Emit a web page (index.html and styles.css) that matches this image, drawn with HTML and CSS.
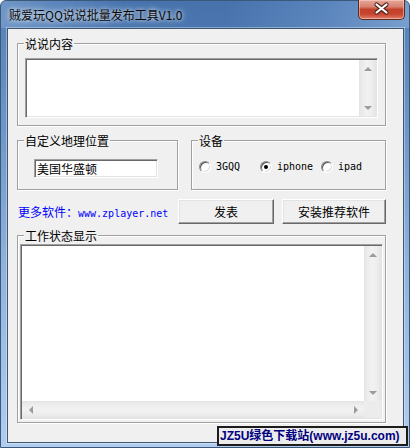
FILE: index.html
```html
<!DOCTYPE html>
<html lang="zh-CN">
<head>
    <meta charset="UTF-8">
    <title>贼爱玩QQ说说批量发布工具V1.0</title>
    <link rel="stylesheet" href="styles.css">
</head>
<body>
    <div class="window">
        <!-- 标题栏 -->
        <div class="title-bar">
            <div class="title">贼爱玩QQ说说批量发布工具V1.0</div>
            <div class="close-btn">
                <svg width="47" height="19" viewBox="0 0 47 19">
                    <path d="M18.5 5.5 L28.5 13.5 M28.5 5.5 L18.5 13.5" stroke="#4a2118" stroke-width="4.2" stroke-linecap="round"/>
                    <path d="M18.5 5.5 L28.5 13.5 M28.5 5.5 L18.5 13.5" stroke="#fff" stroke-width="2.2" stroke-linecap="round"/>
                </svg>
            </div>
        </div>

        <!-- 客户区 -->
        <div class="client">
            <div class="group group-content">
                <div class="group-title">说说内容</div>
                <div class="edit edit-content">
                    <div class="edit-body"></div>
                    <div class="vscroll">
                        <div class="arrow arrow-up"></div>
                        <div class="arrow arrow-down"></div>
                    </div>
                </div>
            </div>

            <div class="row">
                <div class="group group-location">
                    <div class="group-title">自定义地理位置</div>
                    <div class="input">美国华盛顿</div>
                </div>
                <div class="group group-device">
                    <div class="group-title">设备</div>
                    <div class="radios">
                        <div class="radio"><span class="radio-box"></span>3GQQ</div>
                        <div class="radio"><span class="radio-box checked"></span>iphone</div>
                        <div class="radio"><span class="radio-box"></span>ipad</div>
                    </div>
                </div>
            </div>

            <div class="actions">
                <div class="more">更多软件：<span class="site">www.zplayer.net</span></div>
                <div class="btn btn-post">发表</div>
                <div class="btn btn-install">安装推荐软件</div>
            </div>

            <div class="group group-status">
                <div class="group-title">工作状态显示</div>
                <div class="edit edit-status">
                    <div class="edit-body"></div>
                    <div class="vscroll">
                        <div class="arrow arrow-up"></div>
                        <div class="arrow arrow-down"></div>
                    </div>
                    <div class="hscroll">
                        <div class="arrow arrow-left"></div>
                        <div class="arrow arrow-right"></div>
                    </div>
                    <div class="corner"></div>
                </div>
            </div>
        </div>

        <!-- 水印 -->
        <div class="watermark">JZ5U绿色下载站(www.jz5u.com)</div>
    </div>
</body>
</html>
```

FILE: styles.css
```css
* {
    margin: 0;
    padding: 0;
    box-sizing: border-box;
}

body {
    font-family: "Noto Sans CJK SC", "Liberation Sans", sans-serif;
    font-size: 12px;
    color: #000;
    background: #fff;
}

/* 窗口外框 */
.window {
    position: relative;
    width: 410px;
    height: 448px;
    border: 1px solid #3b5878;
    border-radius: 6px 6px 0 0;
    background: linear-gradient(180deg, #5480b8 0, #6a93c6 25%, #8fb3de 60%, #b0cdef 100%);
    display: flex;
    flex-direction: column;
    padding-bottom: 4px;
}

/* 标题栏 */
.title-bar {
    height: 27px;
    display: flex;
    justify-content: space-between;
    align-items: flex-start;
    padding-left: 8px;
    background: linear-gradient(90deg, rgba(140, 175, 215, 0.45) 0, rgba(40, 85, 150, 0.3) 30%, rgba(30, 70, 135, 0.25) 55%, rgba(100, 140, 195, 0.35) 80%, rgba(150, 185, 225, 0.5) 100%);
    border-radius: 5px 5px 0 0;
}

.title {
    margin-top: 6px;
    line-height: 15px;
    color: #0a0a0a;
    text-shadow: 0 0 4px rgba(255, 255, 255, 0.9), 0 0 8px rgba(255, 255, 255, 0.6);
}

.close-btn {
    width: 47px;
    height: 20px;
    margin-top: -1px;
    margin-right: 4px;
    border: 1px solid #5b2a22;
    border-top: none;
    border-radius: 0 0 5px 5px;
    background: linear-gradient(180deg, #e6a598 0, #d88372 35%, #c2412a 50%, #c8452f 75%, #e0806a 100%);
    box-shadow: inset 0 0 0 1px rgba(255, 220, 210, 0.5);
}

.close-btn svg {
    display: block;
    margin: -1px 0 0 -1px;
}

/* 客户区 */
.client {
    height: 415px;
    margin: 0 5px 0 6px;
    border: 1px solid #3e5670;
    box-shadow: 0 0 0 1px rgba(255, 255, 255, 0.35);
    background: #f0f0f0;
    padding-left: 9px;
    display: flex;
    flex-direction: column;
    align-items: flex-start;
}

/* 分组框 */
.group {
    border: 1px solid #a0a0a0;
    box-shadow: inset 1px 1px 0 #fff, 1px 1px 0 #fff;
    display: flex;
    flex-direction: column;
    align-items: flex-start;
}

.group-title {
    margin: -7px 0 0 6px;
    padding: 0 1px;
    height: 14px;
    line-height: 14px;
    background: #f0f0f0;
    white-space: nowrap;
}

.group-content {
    width: 369px;
    margin-top: 14px;
    padding-bottom: 7px;
}

.row {
    display: flex;
    gap: 13px;
    margin-top: 14px;
}

.group-location {
    width: 161px;
    height: 50px;
}

.group-device {
    width: 195px;
    height: 50px;
}

.group-status {
    width: 369px;
    margin-top: 11px;
    padding-bottom: 2px;
}

/* 文本框 */
.edit {
    background: #fff;
    border: 1px solid;
    border-color: #a0a0a0 #fff #fff #a0a0a0;
    box-shadow: inset 1px 1px 0 #696969, inset -1px -1px 0 #e3e3e3;
    padding: 1px;
    display: grid;
}

.edit-content {
    width: 353px;
    height: 60px;
    margin: 7px 0 0 7px;
    grid-template-columns: 1fr 17px;
}

.edit-status {
    width: 363px;
    height: 176px;
    margin: 1px 0 0 2px;
    grid-template-columns: 1fr 17px;
    grid-template-rows: 1fr 17px;
}

.input {
    width: 124px;
    height: 19px;
    margin: 11px 0 0 16px;
    background: #fff;
    border: 1px solid;
    border-color: #a0a0a0 #fff #fff #a0a0a0;
    box-shadow: inset 1px 1px 0 #696969, inset -1px -1px 0 #e3e3e3;
    padding-left: 2px;
    line-height: 17px;
}

/* 滚动条 */
.vscroll {
    background: linear-gradient(90deg, #e4e4e4 0, #ececec 20%, #f2f2f2 50%, #ececec 80%, #e4e4e4 100%);
    display: flex;
    flex-direction: column;
    justify-content: space-between;
}

.hscroll {
    background: linear-gradient(180deg, #e4e4e4 0, #ececec 20%, #f2f2f2 50%, #ececec 80%, #e4e4e4 100%);
    display: flex;
    justify-content: space-between;
}

.corner {
    background: #ececec;
}

.arrow {
    width: 17px;
    height: 17px;
    display: flex;
    align-items: center;
    justify-content: center;
}

.arrow::after {
    content: "";
    width: 0;
    height: 0;
    border: 4px solid transparent;
}

.arrow-up::after {
    border-top: none;
    border-bottom: 4px solid #9c9c9c;
}

.arrow-down::after {
    border-bottom: none;
    border-top: 4px solid #9c9c9c;
}

.arrow-left::after {
    border-left: none;
    border-right: 4px solid #9c9c9c;
}

.arrow-right::after {
    border-right: none;
    border-left: 4px solid #9c9c9c;
}

/* 单选框 */
.radios {
    display: grid;
    grid-template-columns: 61px 61px 61px;
    margin: 12px 0 0 7px;
}

.radio {
    display: flex;
    align-items: center;
    gap: 5px;
    height: 13px;
    font-family: "DejaVu Sans Mono", monospace;
    font-size: 10px;
}

.radio-box {
    width: 12px;
    height: 12px;
    flex-shrink: 0;
    border-radius: 50%;
    border: 1px solid;
    border-color: #8c8c8c #fff #fff #8c8c8c;
    background: #fff;
    box-shadow: inset 1px 1px 0 #555, inset -1px -1px 0 #ddd;
    display: flex;
    align-items: center;
    justify-content: center;
}

.radio-box.checked::after {
    content: "";
    width: 4px;
    height: 4px;
    border-radius: 50%;
    background: #000;
}

/* 按钮行 */
.actions {
    width: 369px;
    height: 25px;
    margin-top: 9px;
    display: flex;
    align-items: center;
    gap: 8px;
}

.more {
    flex: 1;
    margin-left: 1px;
    color: #0000ff;
    white-space: nowrap;
}

.site {
    font-family: "DejaVu Sans Mono", monospace;
    font-size: 10px;
}

.btn {
    height: 25px;
    background: #f0f0f0;
    border: 1px solid;
    border-color: #fff #696969 #696969 #fff;
    box-shadow: inset -1px -1px 0 #a0a0a0, inset 1px 1px 0 #e3e3e3;
    display: flex;
    align-items: center;
    justify-content: center;
}

.btn-post {
    width: 96px;
}

.btn-install {
    width: 104px;
}

/* 水印 */
.watermark {
    position: absolute;
    left: 216px;
    top: 425px;
    width: 191px;
    height: 20px;
    border: 2px solid #1c1c1c;
    background: #ececec;
    color: #000080;
    font-family: "Liberation Sans", "Noto Sans CJK SC", sans-serif;
    font-weight: bold;
    font-size: 12px;
    line-height: 16px;
    padding-left: 1px;
    white-space: nowrap;
    overflow: hidden;
}
```
